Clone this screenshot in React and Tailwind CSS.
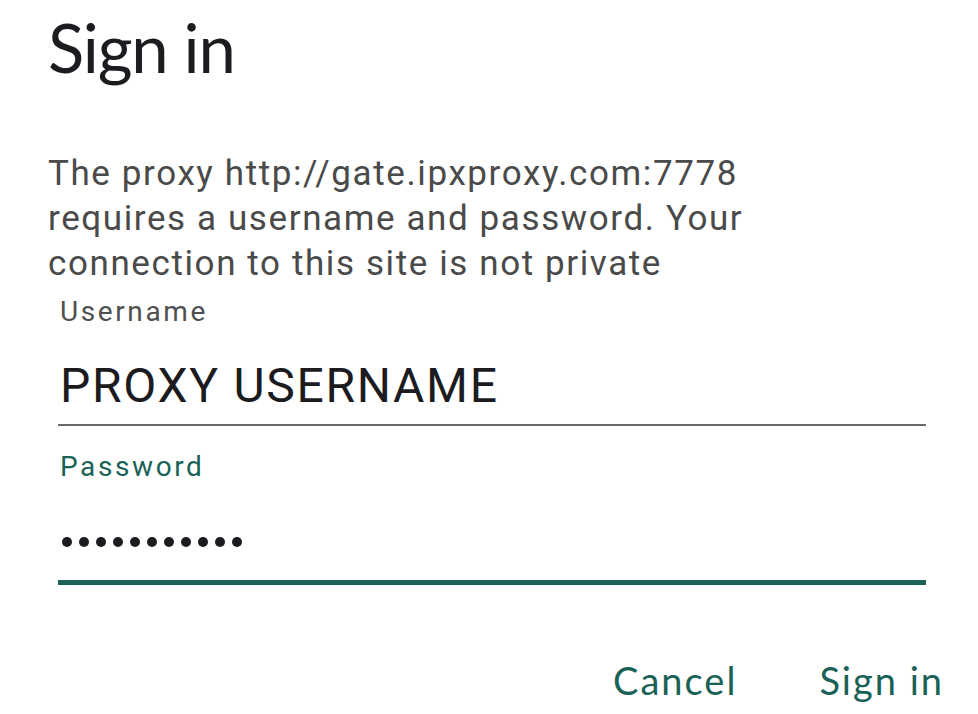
export default function App() {
  return (
    <div className="w-[978px] h-[714px] bg-white overflow-hidden" style={{ fontFamily: "Roboto, 'Liberation Sans', sans-serif" }}>
      <div className="pl-[48px] pr-[38px]">
        <h1 className="pt-[7px] text-[67px] leading-[80px] text-[#1c1b1f] tracking-[-1.2px]" style={{ fontFamily: "Lato, 'Open Sans', sans-serif" }}>Sign in</h1>
        <p className="mt-[64px] text-[35px] leading-[45px] text-[#4a4a4a] tracking-[1.6px] whitespace-nowrap">
          The proxy http://gate.ipxproxy.com:7778<br />requires a username and password. Your<br />connection to this site is not private
        </p>
        <div className="pl-[10px] pr-[14px]">
          <div className="mt-[10px] pl-[2px] text-[28px] leading-[32px] text-[#505050] tracking-[2.6px]">Username</div>
          <div className="mt-[30px] pl-[2px] text-[48px] leading-[56px] text-[#1c1b1f] tracking-[1.7px] whitespace-nowrap">PROXY USERNAME</div>
          <div className="mt-[10px] h-[2px] bg-[#6b6b6b]"></div>
          <div className="mt-[25px] pl-[2px] text-[28px] leading-[32px] text-[#1a6157] tracking-[2.6px]">Password</div>
          <div className="mt-[49px] pl-[4px] flex gap-[7px] items-center h-[20px]">
            {Array.from({ length: 11 }).map((_, i) => (
              <span key={i} className="w-[10px] h-[10px] rounded-full bg-[#1c1b1f]"></span>
            ))}
          </div>
          <div className="mt-[28px] h-[5px] bg-[#1a6157]"></div>
        </div>
        <div className="mt-[72px] -mr-[4px] flex justify-end gap-[82px] text-[38px] leading-[46px] text-[#1a6157] tracking-[2px] whitespace-nowrap" style={{ fontFamily: "Lato, 'Open Sans', sans-serif" }}>
          <span>Cancel</span>
          <span>Sign in</span>
        </div>
      </div>
    </div>
  );
}
